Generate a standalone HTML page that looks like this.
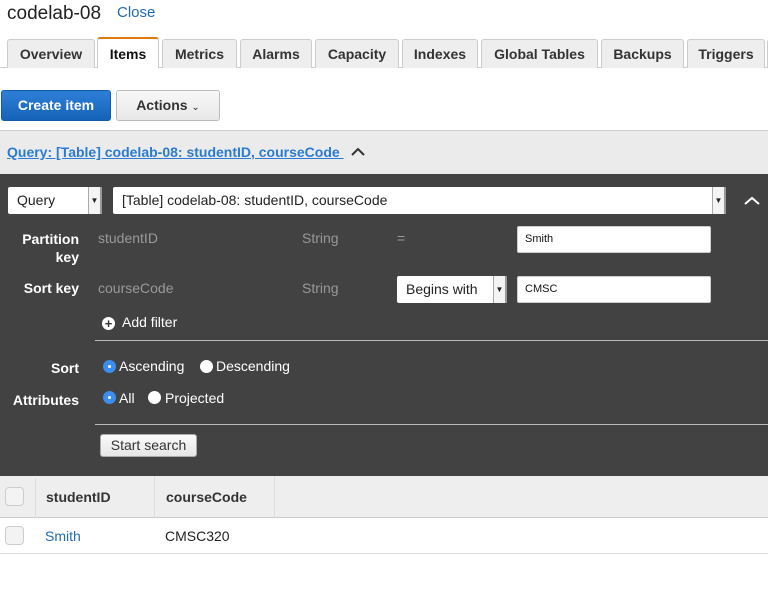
<!DOCTYPE html>
<html><head><style>
*{box-sizing:border-box;margin:0;padding:0}
body{width:768px;height:606px;background:#fff;font-family:"Liberation Sans",Arial,sans-serif;position:relative;overflow:hidden;color:#333}
.a{position:absolute}
.tab{position:absolute;top:39px;height:29px;background:#eee;border:1px solid #ccc;border-bottom:none;border-radius:3px 3px 0 0;font-weight:bold;font-size:14px;color:#333;text-align:center;line-height:28px}
.lbl{position:absolute;color:#fff;font-weight:bold;font-size:14px;text-align:right}
.gr{position:absolute;color:#999;font-size:14px}
.inp{position:absolute;background:#fff;border:1px solid #ccc;border-radius:2px;font-size:11px;color:#111;padding-left:7px;line-height:25px}
.sel{position:absolute;background:#fff;border-radius:2px;font-size:14px;color:#222;padding-left:9px}
.arr{position:absolute;right:0;top:0;bottom:0;width:14px;background:#f4f4f4;border-left:1px solid #aaa;border-right:2px solid #999;font-size:8px;text-align:center}
.rad{position:absolute;width:13px;height:13px;border-radius:50%;background:#fff}
.rad.on{background:#3b8df0}
.rad.on:after{content:"";position:absolute;left:5px;top:5px;width:3px;height:3px;background:#fff;border-radius:50%}
.wt{position:absolute;color:#fff;font-size:14px}
</style></head><body>
<div class="a" style="left:7px;top:3px;font-size:19px;color:#222">codelab-08</div>
<div class="a" style="left:117px;top:4px;font-size:15px;color:#1f6bb6">Close</div>
<div class="a" style="left:0;top:67px;width:768px;height:1px;background:#ccc"></div>
<div class="tab" style="left:7px;width:88px">Overview</div>
<div class="tab" style="left:97px;width:62px;top:37px;height:31px;background:#fff;border-top:2px solid #e47911;color:#111;line-height:30px">Items</div>
<div class="tab" style="left:162px;width:75px">Metrics</div>
<div class="tab" style="left:240px;width:72px">Alarms</div>
<div class="tab" style="left:315px;width:84px">Capacity</div>
<div class="tab" style="left:402px;width:76px">Indexes</div>
<div class="tab" style="left:481px;width:117px">Global Tables</div>
<div class="tab" style="left:601px;width:83px">Backups</div>
<div class="tab" style="left:687px;width:78px">Triggers</div>
<div class="tab" style="left:767px;width:20px"></div>
<div class="a" style="left:1px;top:90px;width:110px;height:31px;background:linear-gradient(#2e7fd6,#1463b8);border:1px solid #125aa8;border-radius:3px;color:#fff;font-weight:bold;font-size:14px;text-align:center;line-height:29px">Create item</div>
<div class="a" style="left:116px;top:90px;width:104px;height:31px;background:linear-gradient(#f8f8f8,#e8e8e8);border:1px solid #bbb;border-radius:3px;color:#333;font-weight:bold;font-size:14px;text-align:center;line-height:29px">Actions <span style="font-weight:normal;font-size:10px">&#8964;</span></div>
<div class="a" style="left:0;top:130px;width:768px;height:44px;background:#ebebeb;border-top:1px solid #ccc"></div>
<div class="a" style="left:7px;top:144px;font-size:14px;font-weight:bold;color:#2a7bd0;text-decoration:underline">Query: [Table] codelab-08: studentID, courseCode&nbsp;</div>
<svg class="a" style="left:351px;top:147px" width="14" height="10"><path d="M1 8 L7 2 L13 8" stroke="#333" stroke-width="2" fill="none"/></svg>
<div class="a" style="left:0;top:174px;width:768px;height:302px;background:#424242"></div>
<div class="sel" style="left:8px;top:187px;width:94px;height:27px;line-height:27px">Query<div class="arr" style="line-height:27px">&#9660;</div></div>
<div class="sel" style="left:113px;top:187px;width:613px;height:27px;line-height:27px">[Table] codelab-08: studentID, courseCode<div class="arr" style="line-height:27px">&#9660;</div></div>
<svg class="a" style="left:744px;top:196px" width="16" height="10"><path d="M1 8 L8 2 L15 8" stroke="#fff" stroke-width="2" fill="none"/></svg>
<div class="lbl" style="left:0;top:230px;width:79px;line-height:18px">Partition<br>key</div>
<div class="gr" style="left:98px;top:230px">studentID</div>
<div class="gr" style="left:302px;top:230px">String</div>
<div class="gr" style="left:397px;top:230px">=</div>
<div class="inp" style="left:517px;top:226px;width:194px;height:27px">Smith</div>
<div class="lbl" style="left:0;top:280px;width:79px">Sort key</div>
<div class="gr" style="left:98px;top:280px">courseCode</div>
<div class="gr" style="left:302px;top:280px">String</div>
<div class="sel" style="left:397px;top:276px;width:110px;height:27px;line-height:27px">Begins with<div class="arr" style="line-height:27px">&#9660;</div></div>
<div class="inp" style="left:517px;top:276px;width:194px;height:27px">CMSC</div>
<div class="a" style="left:102px;top:317px;width:13px;height:13px;border-radius:50%;background:#fff;color:#333;font-weight:bold;font-size:13px;line-height:13px;text-align:center">+</div>
<div class="wt" style="left:122px;top:314px">Add filter</div>
<div class="a" style="left:95px;top:340px;width:673px;height:1px;background:#bbb"></div>
<div class="lbl" style="left:0;top:360px;width:79px">Sort</div>
<div class="rad on" style="left:103px;top:360px"></div><div class="wt" style="left:119px;top:358px">Ascending</div>
<div class="rad" style="left:200px;top:360px"></div><div class="wt" style="left:216px;top:358px">Descending</div>
<div class="lbl" style="left:0;top:392px;width:79px">Attributes</div>
<div class="rad on" style="left:103px;top:391px"></div><div class="wt" style="left:119px;top:390px">All</div>
<div class="rad" style="left:148px;top:391px"></div><div class="wt" style="left:165px;top:390px">Projected</div>
<div class="a" style="left:95px;top:424px;width:673px;height:1px;background:#bbb"></div>
<div class="a" style="left:100px;top:434px;width:97px;height:23px;background:linear-gradient(#fafafa,#e6e6e6);border:1px solid #aaa;border-radius:3px;font-size:14px;color:#333;text-align:center;line-height:21px">Start search</div>
<div class="a" style="left:0;top:476px;width:768px;height:42px;background:#eee;border-bottom:1px solid #ccc"></div>
<div class="a" style="left:35px;top:478px;width:1px;height:40px;background:#ddd"></div>
<div class="a" style="left:154px;top:476px;width:1px;height:42px;background:#ddd"></div>
<div class="a" style="left:274px;top:476px;width:1px;height:42px;background:#ddd"></div>
<div class="a" style="left:5px;top:487px;width:19px;height:19px;border:1px solid #ccc;border-radius:4px;background:#f3f3f3"></div>
<div class="a" style="left:46px;top:489px;font-size:14px;font-weight:bold;color:#333">studentID</div>
<div class="a" style="left:166px;top:489px;font-size:14px;font-weight:bold;color:#333">courseCode</div>
<div class="a" style="left:5px;top:526px;width:19px;height:19px;border:1px solid #ccc;border-radius:4px;background:#f3f3f3"></div>
<div class="a" style="left:45px;top:528px;font-size:14px;color:#1f6bb6">Smith</div>
<div class="a" style="left:165px;top:528px;font-size:14px;color:#222">CMSC320</div>
<div class="a" style="left:0;top:553px;width:768px;height:1px;background:#ddd"></div>
</body></html>
